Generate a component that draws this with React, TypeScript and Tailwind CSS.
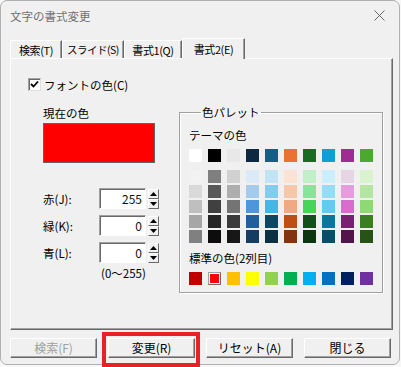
import React from "react";

const theme: string[][] = [
  ["#FFFFFF", "#000000", "#E8E8E8", "#0E2841", "#156082", "#E97132", "#196B24", "#0F9ED5", "#A02B93", "#4EA72E"],
];
const shades: string[][] = [
  ["#F2F2F2", "#7F7F7F", "#D1D1D1", "#DCEAF7", "#C1E4F5", "#FBE2D5", "#C1F0C8", "#CAEEFB", "#E5D5E5", "#DAF2D0"],
  ["#D9D9D9", "#595959", "#AEAEAE", "#A6CAEC", "#83CCEB", "#F7C7AC", "#8BE29A", "#95DCF7", "#E49EDD", "#B4E5A2"],
  ["#BFBFBF", "#404040", "#747474", "#4E95D9", "#47B5E6", "#F1A983", "#47D459", "#61CBF3", "#D86DCD", "#8ED973"],
  ["#A6A6A6", "#262626", "#3A3A3A", "#215F9A", "#0F4761", "#BF4E14", "#124F1A", "#0B76A0", "#782170", "#3B7D23"],
  ["#808080", "#0D0D0D", "#171717", "#153D64", "#0B3041", "#80350E", "#0C3511", "#074F69", "#51154A", "#275317"],
];
const standard = ["#C00000", "#FF0000", "#FFC000", "#FFFF00", "#92D050", "#00B050", "#00B0F0", "#0070C0", "#002060", "#7030A0"];

const FONT = "font-['Noto_Sans_CJK_JP','Noto_Sans',sans-serif]";

function Swatch({ c }: { c: string }) {
  return <div className="w-[13px] h-[13px]" style={{ backgroundColor: c }} />;
}

function SwatchRow({ colors, selected }: { colors: string[]; selected?: number }) {
  return (
    <div className="flex gap-[6px]">
      {colors.map((c, i) =>
        i === selected ? (
          <div
            key={i}
            className="w-[13px] h-[13px] border border-t-[#a0a0a0] border-l-[#a0a0a0] border-r-[#696969] border-b-[#696969] bg-white p-[1px]"
          >
            <div className="w-full h-full" style={{ backgroundColor: c }} />
          </div>
        ) : (
          <Swatch key={i} c={c} />
        )
      )}
    </div>
  );
}

function Arrow({ up }: { up?: boolean }) {
  return (
    <svg width="7" height="4" viewBox="0 0 7 4">
      {up ? <path d="M3.5 0 L7 4 L0 4 Z" fill="#000" /> : <path d="M0 0 L7 0 L3.5 4 Z" fill="#000" />}
    </svg>
  );
}

function Spin({ label, value }: { label: string; value: string }) {
  return (
    <div className="flex items-center h-[21px]">
      <div className="w-[56px] text-[11.5px] leading-[14px] text-black whitespace-nowrap">{label}</div>
      <div className="w-[47px] h-[21px] bg-white border border-t-[#a0a0a0] border-l-[#a0a0a0] border-r-white border-b-white shadow-[inset_1px_1px_0_#696969] flex items-center justify-end pr-[3px] text-[12px] leading-[14px] text-[#111]">
        {value}
      </div>
      <div className="ml-[2px] flex flex-col w-[11px] h-[20px]">
        <div className="h-[10px] flex items-center justify-center bg-[#f0f0f0] border border-t-white border-l-white border-r-[#696969] border-b-[#696969]">
          <Arrow up />
        </div>
        <div className="h-[10px] flex items-center justify-center bg-[#f0f0f0] border border-t-white border-l-white border-r-[#696969] border-b-[#696969]">
          <Arrow />
        </div>
      </div>
    </div>
  );
}

function Btn({ children, disabled }: { children: React.ReactNode; disabled?: boolean }) {
  return (
    <div
      className={`w-[87px] h-[20px] flex items-center justify-center bg-[#f0f0f0] border border-t-white border-l-white border-r-[#696969] border-b-[#696969] shadow-[inset_-1px_-1px_0_#a0a0a0] text-[12px] leading-[14px] whitespace-nowrap ${
        disabled ? "text-[#a0a0a0]" : "text-black"
      }`}
    >
      {children}
    </div>
  );
}

function Tab({ children, w, selected, tight }: { children: React.ReactNode; w: string; selected?: boolean; tight?: boolean }) {
  const track = tight ? "text-[10.5px] tracking-[-0.5px]" : "text-[11px] tracking-[-0.4px]";
  if (selected) {
    return (
      <div
        className={`${w} h-[21px] relative z-10 -mb-[1px] bg-[#f0f0f0] border-t border-l border-r border-t-white border-l-white border-r-[#696969] shadow-[inset_-1px_0_0_#a0a0a0] flex items-center justify-center ${track} leading-[14px] text-black whitespace-nowrap`}
      >
        {children}
      </div>
    );
  }
  return (
    <div
      className={`${w} h-[18px] bg-[#f0f0f0] border-t border-l border-r border-t-white border-l-white border-r-[#696969] shadow-[inset_-1px_0_0_#a0a0a0] flex items-center justify-center ${track} leading-[14px] text-black whitespace-nowrap`}
    >
      {children}
    </div>
  );
}

export default function App() {
  return (
    <div className={`w-[401px] h-[367px] bg-[#f7f7f7] relative overflow-hidden ${FONT}`}>
      <div className="w-[400px] h-[365px] bg-[#f0f0f0] border border-[#b0b0b0] rounded-[7px] flex flex-col">
        {/* Title bar */}
        <div className="h-[29px] flex items-center justify-between pl-[9px] pr-[10px]">
          <div className="text-[11.5px] leading-[14px] text-[#707070]">文字の書式変更</div>
          <svg width="11" height="11" viewBox="0 0 11 11" className="mr-[4px]">
            <path d="M0.5 0.5 L10.5 10.5 M10.5 0.5 L0.5 10.5" stroke="#6a6a6a" strokeWidth="1" />
          </svg>
        </div>

        {/* Tabs */}
        <div className="ml-[9px] mt-[8px] h-[20px] flex items-end">
          <Tab w="w-[52px]">検索(T)</Tab>
          <Tab w="w-[62px]" tight>
            スライド(S)
          </Tab>
          <Tab w="w-[58px]">書式1(Q)</Tab>
          <Tab w="w-[63px]" selected>
            書式2(E)
          </Tab>
        </div>

        {/* Panel */}
        <div className="ml-[9px] w-[383px] h-[272px] border border-t-white border-l-white border-r-[#696969] border-b-[#696969] shadow-[inset_-1px_-1px_0_#a0a0a0] flex flex-col pt-[19px] pl-[17px]">
          <div className="flex items-center h-[13px]">
            <div className="w-[13px] h-[13px] bg-white border border-t-[#a0a0a0] border-l-[#a0a0a0] border-r-[#e0e0e0] border-b-[#e0e0e0] shadow-[inset_1px_1px_0_#696969] flex items-center justify-center">
              <svg width="9" height="9" viewBox="0 0 9 9">
                <path d="M1 4 L3.5 6.5 L8 1.5" stroke="#000" strokeWidth="1.8" fill="none" />
              </svg>
            </div>
            <div className="ml-[3px] text-[11.5px] leading-[14px] text-black">フォントの色(C)</div>
          </div>

          <div className="flex mt-[14px]">
            {/* Left column */}
            <div className="w-[151px] pl-[15px] pt-[1px] flex flex-col">
              <div className="text-[11.5px] leading-[14px] text-black">現在の色</div>
              <div className="mt-[3px] w-[112px] h-[40px] bg-[#ff0000] border border-[#646464]" />
              <div className="mt-[25px] flex flex-col gap-[6px]">
                <Spin label="赤(J):" value="255" />
                <Spin label="緑(K):" value="0" />
                <Spin label="青(L):" value="0" />
              </div>
              <div className="mt-[3px] ml-[58px] text-[11.5px] leading-[14px] text-black whitespace-nowrap">(0〜255)</div>
            </div>

            {/* Palette group */}
            <fieldset className="w-[200px] h-[188px] border border-[#a0a0a0] shadow-[inset_1px_1px_0_#ffffff,1px_1px_0_#ffffff] px-[9px] pb-[6px]">
              <legend className="ml-[12px] px-[1px] text-[11.5px] leading-[14px] text-black">色パレット</legend>
              <div className="mt-[9px] text-[11.5px] leading-[14px] text-black">テーマの色</div>
              <div className="mt-[7px]">
                <SwatchRow colors={theme[0]} />
              </div>
              <div className="mt-[8px] flex flex-col gap-[2px]">
                {shades.map((r, i) => (
                  <SwatchRow key={i} colors={r} />
                ))}
              </div>
              <div className="mt-[8px] text-[11.5px] leading-[14px] text-black whitespace-nowrap">標準の色(2列目)</div>
              <div className="mt-[7px]">
                <SwatchRow colors={standard} selected={1} />
              </div>
            </fieldset>
          </div>
        </div>

        {/* Buttons */}
        <div className="ml-[9px] mt-[8px] flex gap-[11px]">
          <Btn disabled>検索(F)</Btn>
          <Btn>変更(R)</Btn>
          <Btn>リセット(A)</Btn>
          <Btn>閉じる</Btn>
        </div>
      </div>

      {/* annotation highlight */}
      <div className="absolute left-[102px] top-[332px] w-[98px] h-[35px] border-[4px] border-[#e8202a]" />
    </div>
  );
}
